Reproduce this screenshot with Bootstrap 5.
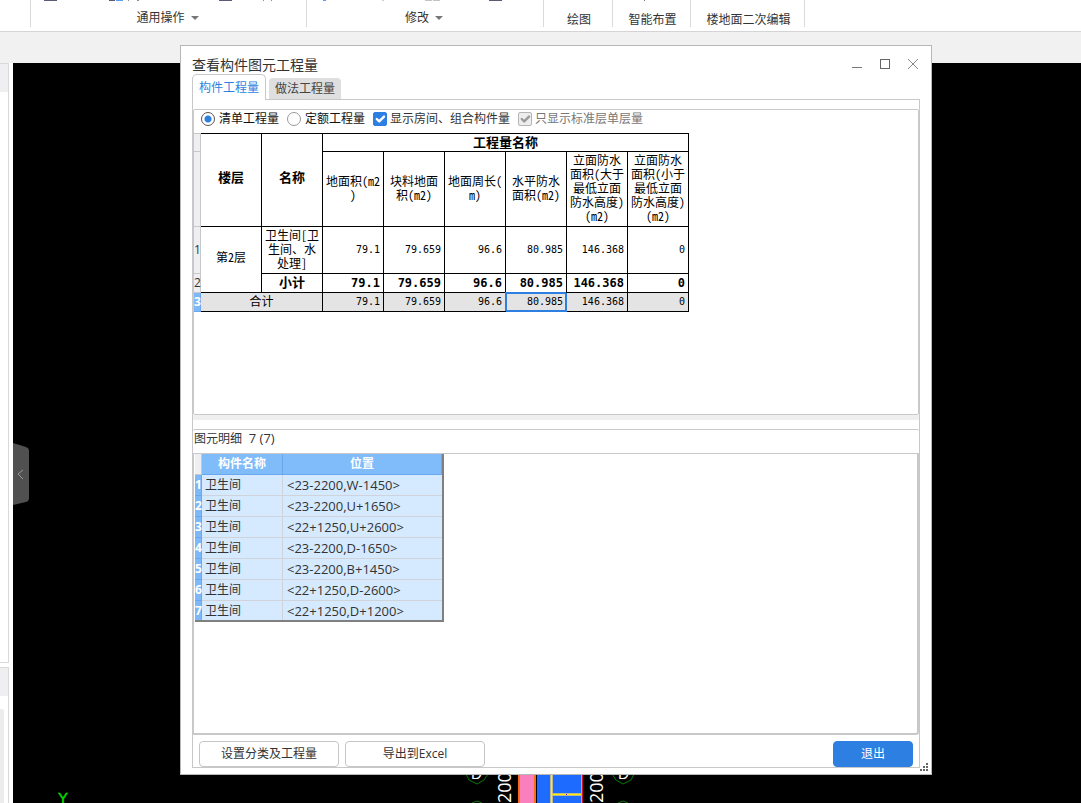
<!DOCTYPE html>
<html lang="zh-CN">
<head>
<meta charset="utf-8">
<meta name="viewport" content="width=device-width, initial-scale=1">
<title>查看构件图元工程量</title>
<link href="https://cdn.jsdelivr.net/npm/bootstrap@5.3.0/dist/css/bootstrap.min.css" rel="stylesheet">
<script src="https://cdn.jsdelivr.net/npm/bootstrap@5.3.0/dist/js/bootstrap.bundle.min.js" defer></script>
<style>
:root { --line: #c8c8ca; --accent: #2d7fe1; --ink: #333; }
body { font: 12px/16px "Open Sans", "Noto Sans CJK SC", sans-serif; color: var(--ink); background: #f1f1f1; }
.ribbon { height: 32px; background: #fff; border-bottom: 1px solid #d4d4d4; }
.ribbon-group { position: relative; height: 27px; border-right: 1px solid #dadada; display: flex; justify-content: center; align-items: flex-end; }
.ribbon-group svg.tips { position: absolute; left: 0; top: 0; }
.ribbon-group button { border: 0; background: none; padding: 0 0 0 2px; color: var(--ink); line-height: 14px; }
.ribbon-group button.menu { margin-bottom: 2px; padding: 0; }
.w-edge { width: 31px; } .w-common { width: 276px; } .w-modify { width: 237px; }
.w-draw { width: 69px; } .w-smart { width: 78px; } .w-second { width: 114px; }
.caret { width: 0; height: 0; border: 4px solid transparent; border-top-color: #777; border-bottom: 0; display: inline-block; margin: 0 2px 2px 6px; }

.workspace { margin-top: 31px; background: #fff; }
.side { width: 9px; margin-right: 4px; }
.side-box { border: solid #d9d9d9; border-width: 1px 1px 1px 0; background: #fff; }
.side-head { height: 28px; background: #efeff1; }
.side-top { height: 600px; margin-bottom: 4px; }
.side-scroll { width: 4px; background: #ececec; margin-top: 13px; border-radius: 0 2px 0 0; }
.cad { background: #000; position: relative; overflow: hidden; }
.cad .drawing { position: absolute; left: 0; top: 0; }
.handle { position: absolute; left: 0; top: 380px; border: 0; padding: 0; background: none; line-height: 0; }

.dialog-win { position: absolute; left: 180px; top: 45px; width: 752px; height: 730px; background: #fff; border: 1px solid #b7b7b9; padding: 0 11px 6px; z-index: 2; }
.title-row { height: 28px; }
.dialog-title { font-size: 14px; line-height: 20px; padding-top: 9px; }
.win-ctl button { border: 0; background: none; padding: 0; line-height: 0; }
.win-ctl { gap: 16px; margin-right: 1px; padding-top: 4px; }
.tabs { height: 25px; }
.tabs button { border: 0; font-size: 12px; line-height: 16px; padding: 0; }
.tabs .on { width: 74px; height: 26px; color: var(--accent); background: #fff; border: 1px solid var(--line); border-bottom: 0; border-radius: 5px 5px 0 0; margin-bottom: -1px; z-index: 1; }
.tabs .off { width: 72px; height: 21px; background: #dfdfdf; border-radius: 4px 4px 0 0; color: #444; margin-left: 3px; }
.pane { border: 1px solid var(--line); padding-top: 9px; }
.frame { border: 1px solid var(--line); border-radius: 2px; }
.frame-top { height: 306px; }
.options { height: 23px; padding: 1px 0 0 7px; }
.options .form-check { min-height: 0; padding: 0; margin: 0; display: flex; align-items: center; }
.options .form-check-input { float: none; margin: 0; width: 14px; height: 14px; border-color: #999; flex: none; box-shadow: none; }
.options .form-check-input[type=checkbox] { border-radius: 2px; background-size: 16px; }
.options .form-check-input:checked { background-color: var(--accent); border-color: var(--accent); }
.options .form-check-input[type=radio]:checked { background-color: #fff; border-color: #555; background-image: radial-gradient(circle, var(--accent) 3px, transparent 4px); }
.options .form-check-input:disabled:checked { background-color: #ededed; border-color: #b4b4b4; opacity: 1; background-image: url("data:image/svg+xml,%3csvg xmlns='http://www.w3.org/2000/svg' viewBox='0 0 20 20'%3e%3cpath fill='none' stroke='%23999' stroke-linecap='round' stroke-linejoin='round' stroke-width='3' d='m6 10 3 3 6-6'/%3e%3c/svg%3e"); }
.options label { color: #111; margin-left: 4px; }
.options input[type=checkbox] + label { margin-left: 3px; }
.options .form-check input:disabled + label { color: #777; opacity: 1; }
.options .shown label { color: var(--ink); }

.qty { border-collapse: separate; border-spacing: 0; table-layout: fixed; width: 495px; color: #000; font: 12px/14px "Noto Sans CJK SC", sans-serif; font-feature-settings: "hwid"; }
.qty th, .qty td { border: solid #000; border-width: 0 1px 1px 0; padding: 0 0 2px; text-align: center; vertical-align: middle; font-weight: 400; white-space: nowrap; }
.qty thead tr:first-child > * { border-top-width: 1px; }
.qty td.num { text-align: right; padding: 0 3px 0 0; font-family: "DejaVu Sans Mono", monospace; font-size: 10px; }
.qty .strong { font-weight: 700; font-size: 13px; }
.qty .sub > td.num { font-weight: 700; font-size: 12px; }
.qty [rowspan] { padding-bottom: 6px; }
.qty .idx { background: #efeff1; border-color: var(--line); font: 12px/14px "Open Sans", sans-serif; color: var(--ink); padding: 0; }
.qty .sum > td { background: #e4e4e4; }
.qty .sum > .idx, .detail .idx { background: #7db8f8; color: #fff; font-weight: 700; border-color: #69a8ec; }
.qty .sum > .cur { box-shadow: inset 1px 1px 0 var(--accent), inset -1px -1px 0 var(--accent), -1px -1px 0 var(--accent); border-color: var(--accent); }
.r18 { height: 19px; } .r75 { height: 75px; } .r47 { height: 47px; }

.splitter { height: 5px; background: #efeff0; margin-bottom: 9px; }
.frame-bottom { border-top: 1px solid var(--line); border-radius: 2px; }
.detail-title { height: 23px; padding-left: 1px; line-height: 16px; white-space: pre; }
.detail-title span { font-size: 13px; }
.detail-box { height: 282px; padding-left: 1px; border: solid var(--line); border-width: 1px 2px 2px 1px; border-radius: 0 0 3px 0; }
.detail { border-collapse: separate; border-spacing: 0; table-layout: fixed; width: 249px; border: solid #808080; border-width: 0 2px 2px 0; }
.detail th, .detail td { height: 21px; padding: 0; border: solid #d0d4da; border-width: 0 1px 1px 0; line-height: 16px; white-space: nowrap; }
.detail td { background: #d6eaff; padding-left: 3px; }
.detail td + td { padding-left: 4px; font-size: 13px; }
.detail thead th { background: #80bbfa; color: #fff; text-align: center; border-color: #69a8ec; }
.detail thead .corner { background: #efeff1; border-color: var(--line); }
.detail .idx { text-align: left; }
.detail tr > td:last-child { border-right: 0; }
.detail tbody tr:last-child > * { height: 19px; border-bottom: 0; }

.actions { padding: 6px 6px 0; gap: 6px; }
.actions .btn { height: 26px; width: 140px; padding: 0; font-size: 12px; line-height: 16px; border: 1px solid #c6c6c8; border-radius: 4px; color: var(--ink); background: #fff; }
.actions .btn-go { width: 80px; background: var(--accent); border-color: var(--accent); color: #fff; }
.grip { position: absolute; right: 2px; bottom: 2px; }
</style>
</head>
<body class="vh-100 d-flex flex-column overflow-hidden position-relative">

<header class="ribbon d-flex flex-shrink-0">
  <div class="ribbon-group w-edge"></div>
  <div class="ribbon-group w-common">
    <svg class="tips" width="276" height="2" aria-hidden="true"><g fill="#575b75"><rect x="13" width="13" height="1"/><rect x="78" width="6" height="1"/><rect x="188" width="13" height="1"/></g><rect x="85" width="7" height="1" fill="#5c9cf0"/><g fill="#8a8d9c"><rect x="97" width="1" height="1"/><rect x="106" width="2" height="1"/><rect x="232" width="1" height="1"/><rect x="240" width="1" height="1"/></g></svg>
    <button class="menu" type="button">通用操作<span class="caret"></span></button>
  </div>
  <div class="ribbon-group w-modify">
    <svg class="tips" width="236" height="2" aria-hidden="true"><rect x="16" width="3" height="1" fill="#5c9cf0"/><rect x="75" width="2" height="1" fill="#ccc"/><rect x="118" width="7" height="1" fill="#c4c4c4"/><rect x="126" width="7" height="1" fill="#c4c4c4"/><rect x="182" width="13" height="1" fill="#575b75"/></svg>
    <button class="menu" type="button">修改<span class="caret"></span></button>
  </div>
  <div class="ribbon-group w-draw"><button type="button">绘图</button></div>
  <div class="ribbon-group w-smart">
    <svg class="tips" width="77" height="2" aria-hidden="true"><rect x="31" width="1" height="1" fill="#777"/></svg>
    <button type="button">智能布置</button>
  </div>
  <div class="ribbon-group w-second"><button type="button">楼地面二次编辑</button></div>
</header>

<main class="workspace d-flex flex-grow-1 overflow-hidden">
  <aside class="side d-flex flex-column flex-shrink-0">
    <div class="side-box side-top flex-shrink-0"><div class="side-head"></div></div>
    <div class="side-box flex-grow-1 d-flex flex-column border-bottom-0"><div class="side-head"></div><div class="side-scroll flex-grow-1"></div></div>
  </aside>
  <section class="cad flex-grow-1" aria-label="绘图区">
    <svg class="drawing" width="1068" height="740" viewBox="13 63 1068 740" font-family="Liberation Sans, sans-serif">
      <text x="58" y="803" font-size="15" fill="#00e000" stroke="#00e000" stroke-width=".4">Y</text>
      <g fill="none" stroke="#0a7a0a">
        <path d="M466 774l3 6 8 4 7-4 4-6M612 774l4 6 7 4 8-4 3-6M472 803l5-2 5 2M618 803l5-2 5 2"/>
      </g>
      <g fill="#fff" font-size="15"><text x="471" y="779">D</text><text x="618" y="779">D</text></g>
      <g fill="#fff" font-size="18" font-family="Open Sans, sans-serif"><text transform="translate(511 803) rotate(-90)">200</text><text transform="translate(603 803) rotate(-90)">200</text></g>
      <rect x="518" y="774" width="18" height="29" fill="#ff6a1a"/><rect x="520" y="774" width="14" height="29" fill="#f97fbd"/>
      <rect x="537" y="774" width="44" height="29" fill="#1e6bff"/>
      <path d="M551.500 774v29M552 794.500h29" stroke="#bdb98a" stroke-width="3"/>
      <path d="M551.500 774v29M552 794.500h29" stroke="#ffee00"/>
      <path d="M581.500 774v29" stroke="#8fb4d8"/><path d="M582.500 774v29" stroke="#d01030"/>
      <rect x="566" y="794" width="1" height="1" fill="#60f"/>
    </svg>
    <button class="handle" type="button" aria-label="收起"><svg width="16" height="63"><path d="M0 0l13 4q3 1 3 4v47q0 3-3 4L0 62z" fill="#505050"/><path d="M10 27l-5 4 5 5" fill="none" stroke="#999"/></svg></button>
  </section>
</main>

<div class="dialog-win d-flex flex-column" role="dialog" aria-labelledby="dlg-title">
  <div class="title-row d-flex justify-content-between">
    <div class="dialog-title" id="dlg-title">查看构件图元工程量</div>
    <div class="win-ctl d-flex align-items-start">
      <button type="button" aria-label="最小化"><svg width="12" height="24"><path d="M1 17.500h10" stroke="#777"/></svg></button>
      <button type="button" aria-label="最大化"><svg width="12" height="24"><rect x="1.500" y="9.500" width="9" height="9" fill="none" stroke="#666"/></svg></button>
      <button type="button" aria-label="关闭"><svg width="12" height="24"><path d="M1 9l10 10M11 9L1 19" stroke="#888"/></svg></button>
    </div>
  </div>
  <div class="tabs d-flex align-items-end" role="tablist">
    <button class="on" type="button" role="tab" aria-selected="true">构件工程量</button>
    <button class="off" type="button" role="tab" aria-selected="false">做法工程量</button>
  </div>
  <div class="pane flex-grow-1 d-flex flex-column">
    <div class="frame frame-top">
      <form class="options d-flex align-items-start">
        <div class="form-check me-2"><input class="form-check-input" type="radio" name="kind" id="k1" checked><label for="k1">清单工程量</label></div>
        <div class="form-check me-2"><input class="form-check-input" type="radio" name="kind" id="k2"><label for="k2">定额工程量</label></div>
        <div class="form-check me-2 shown"><input class="form-check-input" type="checkbox" id="c1" checked><label for="c1">显示房间、组合构件量</label></div>
        <div class="form-check"><input class="form-check-input" type="checkbox" id="c2" checked disabled><label for="c2">只显示标准层单层量</label></div>
      </form>
      <table class="qty">
        <colgroup><col style="width:7px"><col span="8"></colgroup>
        <thead>
          <tr class="r18"><th class="idx"></th><th class="strong" rowspan="2">楼层</th><th class="strong" rowspan="2">名称</th><th class="strong" colspan="6">工程量名称</th></tr>
          <tr class="r75"><th class="idx"></th><th>地面积(m2<br>)</th><th>块料地面<br>积(m2)</th><th>地面周长(<br>m)</th><th>水平防水<br>面积(m2)</th><th>立面防水<br>面积(大于<br>最低立面<br>防水高度)<br>(m2)</th><th>立面防水<br>面积(小于<br>最低立面<br>防水高度)<br>(m2)</th></tr>
        </thead>
        <tbody>
          <tr class="r47"><th class="idx">1</th><td rowspan="2">第2层</td><td>卫生间[卫<br>生间、水<br>处理]</td><td class="num">79.1</td><td class="num">79.659</td><td class="num">96.6</td><td class="num">80.985</td><td class="num">146.368</td><td class="num">0</td></tr>
          <tr class="r18 sub"><th class="idx">2</th><td class="strong">小计</td><td class="num">79.1</td><td class="num">79.659</td><td class="num">96.6</td><td class="num">80.985</td><td class="num">146.368</td><td class="num">0</td></tr>
          <tr class="r18 sum"><th class="idx">3</th><td colspan="2">合计</td><td class="num">79.1</td><td class="num">79.659</td><td class="num">96.6</td><td class="num cur">80.985</td><td class="num">146.368</td><td class="num">0</td></tr>
        </tbody>
      </table>
    </div>
    <div class="splitter"></div>
    <div class="frame-bottom">
      <div class="detail-title">图元明细<span>  7 (7)</span></div>
      <div class="detail-box">
        <table class="detail">
          <colgroup><col style="width:7px"><col style="width:81px"><col></colgroup>
          <thead><tr><th class="corner"></th><th>构件名称</th><th>位置</th></tr></thead>
          <tbody>
            <tr><th class="idx">1</th><td>卫生间</td><td>&lt;23-2200,W-1450&gt;</td></tr>
            <tr><th class="idx">2</th><td>卫生间</td><td>&lt;23-2200,U+1650&gt;</td></tr>
            <tr><th class="idx">3</th><td>卫生间</td><td>&lt;22+1250,U+2600&gt;</td></tr>
            <tr><th class="idx">4</th><td>卫生间</td><td>&lt;23-2200,D-1650&gt;</td></tr>
            <tr><th class="idx">5</th><td>卫生间</td><td>&lt;23-2200,B+1450&gt;</td></tr>
            <tr><th class="idx">6</th><td>卫生间</td><td>&lt;22+1250,D-2600&gt;</td></tr>
            <tr><th class="idx">7</th><td>卫生间</td><td>&lt;22+1250,D+1200&gt;</td></tr>
          </tbody>
        </table>
      </div>
    </div>
    <div class="actions d-flex">
      <button class="btn" type="button">设置分类及工程量</button>
      <button class="btn" type="button">导出到Excel</button>
      <button class="btn btn-go ms-auto" type="button">退出</button>
    </div>
  </div>
  <svg class="grip" width="9" height="9" fill="#666" aria-hidden="true"><path d="M6 0h2v2h-2zM3 3h2v2h-2zM6 3h2v2h-2zM0 6h2v2h-2zM3 6h2v2h-2zM6 6h2v2h-2z"/></svg>
</div>
</body>
</html>
